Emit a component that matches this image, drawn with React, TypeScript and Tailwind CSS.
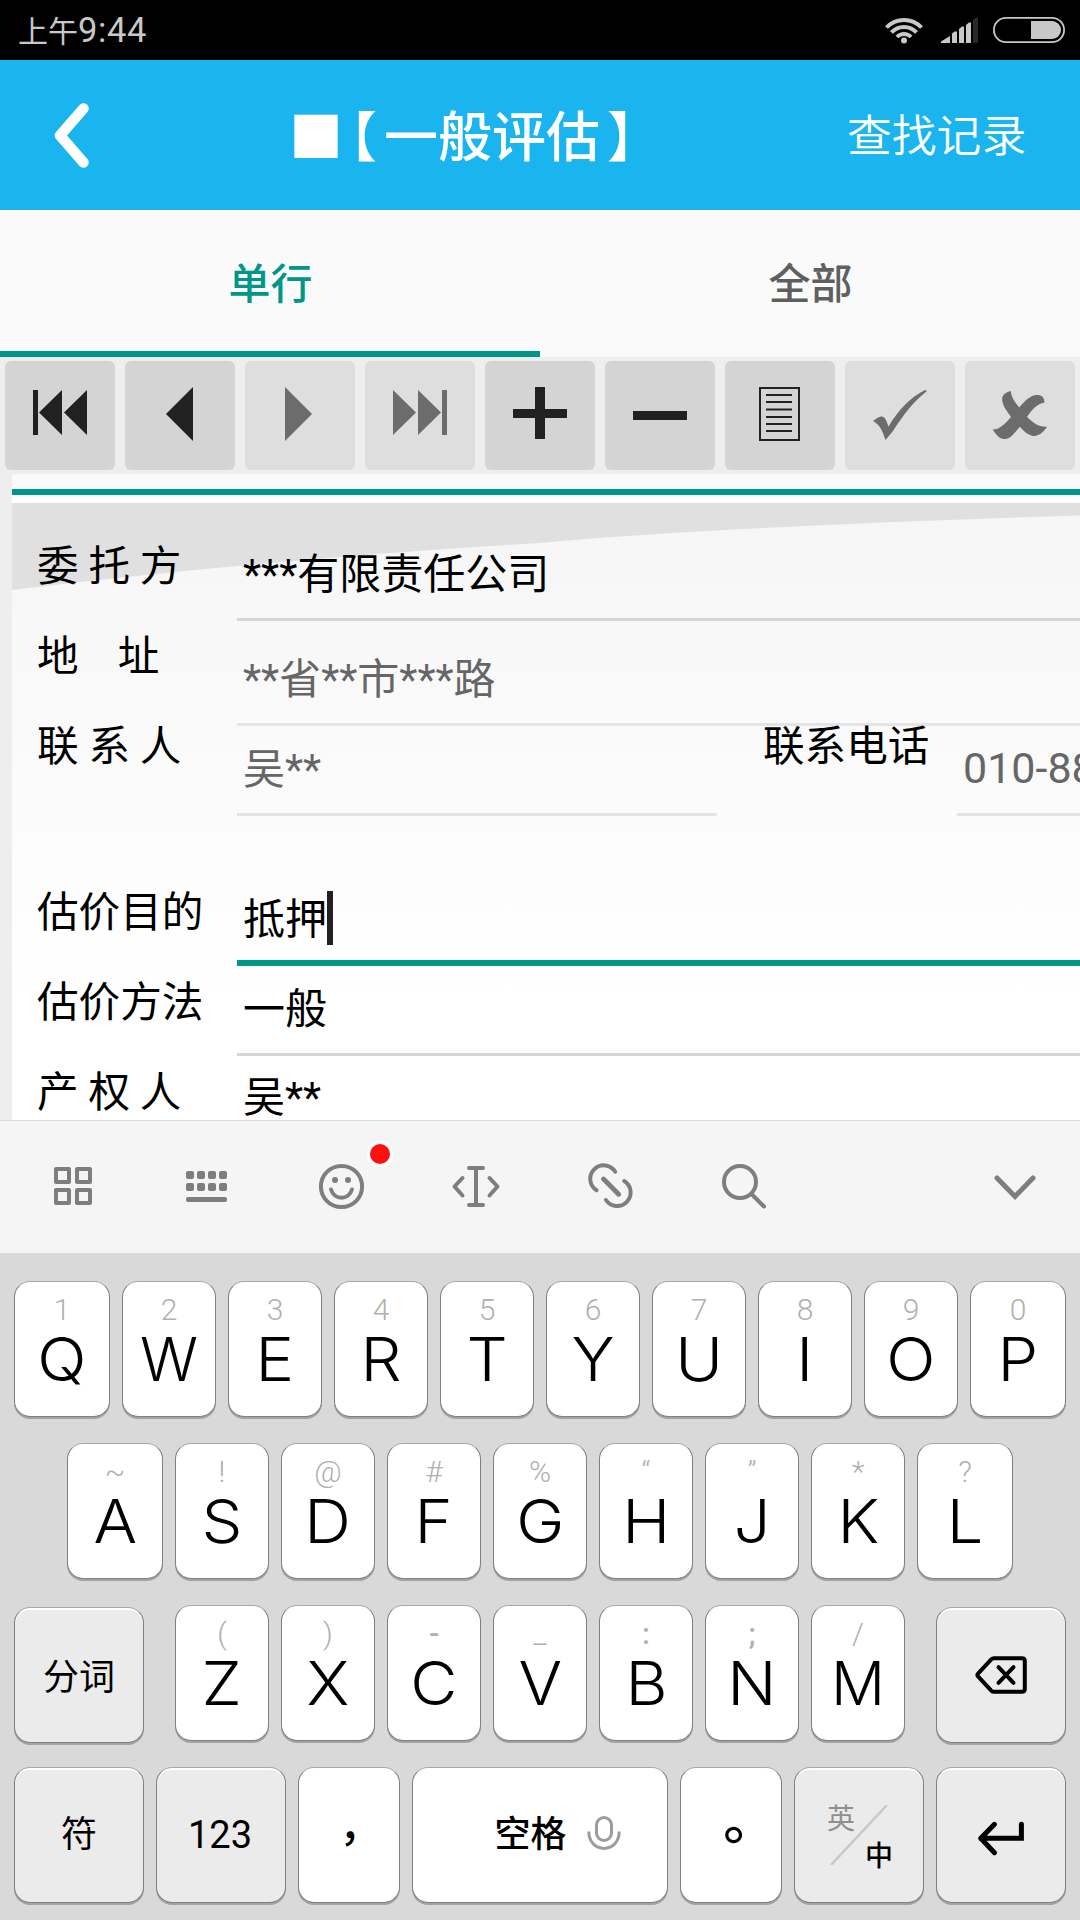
import type { ReactNode } from "react";
import { clsx } from "clsx";

const BackIcon = () => (
  <svg className="h-[70px] w-10" viewBox="0 0 40 70" fill="none">
    <path
      d="M33.500 8.500 10 35.500 33.500 62.500"
      stroke="#fff"
      strokeWidth="10.500"
      strokeLinecap="round"
      strokeLinejoin="round"
    />
  </svg>
);

const StatusBar = () => (
  <div className="flex h-[60px] items-center justify-between bg-black pr-[15px] pl-[18px] text-[#c8c8c8]">
    <div className="flex items-baseline pt-[2px]">
      <span className="text-[30px] leading-[40px]">上午</span>
      <span className="text-[34.5px] leading-[40px] tracking-[0.6px]">9:44</span>
    </div>
    <div className="flex items-center">
      <svg className="h-7 w-[38px]" viewBox="0 0 38 28" fill="none" stroke="#c8c8c8" strokeWidth="4">
        <path d="M1.500 11.500a24 24 0 0 1 35 0" />
        <path d="M6.500 16.500a17 17 0 0 1 25 0" />
        <path d="M12 21a9.500 9.500 0 0 1 14 0" />
        <circle cx="19" cy="24.600" r="3" fill="#c8c8c8" stroke="none" />
      </svg>
      <svg className="ml-[18px] h-[26px] w-[37px]" viewBox="0 0 37 26" fill="#c8c8c8">
        <path d="M0 26v-1.500L9 19v7zM11 26v-9.500l2.500-2h2.500v11.500zM18 26V12l3-2.500h2V26zM25 26V8l3-2.500h2V26z" />
        <path d="M32 26V3l3-2.500h2V26z" fill="#292929" />
      </svg>
      <svg className="ml-[15px] h-[26px] w-[72px]" viewBox="0 0 72 26">
        <rect x="0.9" y="0.9" width="70.200" height="24.200" rx="12.100" fill="none" stroke="#c8c8c8" strokeWidth="1.800" />
        <path d="M38 4h21a9 9 0 0 1 0 18H38z" fill="#c8c8c8" />
      </svg>
    </div>
  </div>
);

const Header = () => (
  <div className="flex h-[150px] items-center bg-[#1ab4ef] text-white">
    <div className="flex w-[289px] pl-[50px]">
      <BackIcon />
    </div>
    <div className="flex w-[558px] pt-[7px] text-[54px] leading-[60px] font-medium">
      <span className="-mr-[20px]">■</span>
      <span className="mr-[7px]">【</span>
      <span className="mr-[7px]">一般评估</span>
      <span>】</span>
    </div>
    <div className="pt-1 text-[44.8px] leading-[60px] font-[350]">查找记录</div>
  </div>
);

const Tabs = () => (
  <div className="flex h-[147px] bg-[#fafafa] text-[42px] leading-[60px] font-medium">
    <div className="flex w-1/2 items-center justify-center border-b-6 border-[#009688] pt-2 pl-px text-[#009688]">
      单行
    </div>
    <div className="flex w-1/2 items-center justify-center pt-[2px] pl-px text-[#5f5f5f]">全部</div>
  </div>
);

const tools: { icon: ReactNode; disabled?: boolean }[] = [
  { icon: <path d="M28 29h5v45h-5zM34 51.500 57 29v45zM59 51.500 82 29v45z" /> },
  { icon: <path d="M41 53 68 26v54z" /> },
  { icon: <path d="M67 53 40 26v54z" />, disabled: true },
  { icon: <path d="M77 29h5v45h-5zM51 51.500 28 29v45zM76 51.500 53 29v45z" />, disabled: true },
  { icon: <path d="M28 48h22V26h10v22h22v9H60v21H50V57H28z" /> },
  { icon: <path d="M28 50h54v9H28z" /> },
  {
    icon: (
      <path
        d="M35 27h39v52H35zM41 34h26M41 41h26M41 48.500h26M41 56h26M41 63h26M41 70h26"
        fill="none"
        stroke="currentColor"
        strokeWidth="2"
      />
    ),
  },
  {
    icon: (
      <path d="M28 60c3-2 5-4 8-4.500 3-.5 5 2 7.500 10.200C53 49 66 36 80 29l2 1C68 41 59 53 48 70l-7.500 9C38 72 36 64 28 60z" />
    ),
    disabled: true,
  },
  {
    icon: (
      <path d="M45.700 30c-5 1.500-8 3.500-8.500 7-.5 7 4 12 8.800 19-5 6-8.500 9-11.300 10.500-2 1.500-4.500 1.500-6.900 2.200C32 75 35 78 40 78c6-.5 9-6 15-12.300C60 72 65 75 70 75c5-1 9-4.500 12-9.300-8 .5-14-3.700-20-10 5-6.700 10-13 17.500-14.200C79 36 77 34 72 34c-6-.2-12 5.500-17.800 12.500C50 41 46.500 37 45.700 30z" />
    ),
    disabled: true,
  },
];

const Toolbar = () => (
  <div className="flex h-[117px] gap-[10px] bg-[#eeeeee] px-[5px] py-1">
    {tools.map((tool, i) => (
      <button
        key={i}
        className={clsx(
          "h-[109px] w-[110px] rounded-md",
          tool.disabled ? "bg-[#dedede] text-[#6c6c6c]" : "bg-[#d4d4d4] text-[#212121]"
        )}
      >
        <svg className="h-[109px] w-[110px]" viewBox="0 0 110 109" fill="currentColor">
          {tool.icon}
        </svg>
      </button>
    ))}
  </div>
);

const Label = ({ children, className }: { children: ReactNode; className?: string }) => (
  <div
    className={clsx(
      "h-9 shrink-0 pt-[3px] text-[41.6px] leading-9 whitespace-pre [word-spacing:-0.5px]",
      className
    )}
  >
    {children}
  </div>
);

const Field = ({ children, className }: { children: ReactNode; className?: string }) => (
  <div className={clsx("flex items-end border-b-3 pl-[6px] leading-[42px]", className)}>
    {children}
  </div>
);

const Form = () => (
  <div className="h-[646px] overflow-hidden bg-[#eeeeee] pl-3">
    <div className="h-[15px] bg-[#fafafa]" />
    <div className="h-[6px] bg-[#009688]" />
    <div className="h-2 bg-white" />
    <div className="relative h-[617px] overflow-hidden text-[42px] text-black">
      <svg className="absolute inset-0 h-[617px] w-[1068px]" viewBox="0 0 1068 617">
        <defs>
          <linearGradient id="paper" x1="0" y1="0" x2="0" y2="1">
            <stop offset="0" stopColor="#f6f6f6" />
            <stop offset="0.2" stopColor="#f8f8f8" />
            <stop offset="0.8" stopColor="#ffffff" />
          </linearGradient>
        </defs>
        <rect width="1068" height="617" fill="url(#paper)" />
        <path d="M0 0H1068V12.500Q700 24 528 40Q260 56 0 87z" fill="#e0e0e0" />
      </svg>
      <div className="relative flex flex-col pl-[25px]">
        <div className="flex h-[118px]">
          <Label className="mt-[43px] w-[200px]">委 托 方</Label>
          <Field className="grow border-[#d6d6d6] pb-[22px]">***有限责任公司</Field>
        </div>
        <div className="flex h-[105px]">
          <Label className="mt-[15px] w-[200px]">地    址</Label>
          <Field className="grow border-[#e4e4e4] pb-[22px] text-[#666]">**省**市***路</Field>
        </div>
        <div className="flex h-[90px]">
          <Label className="w-[200px]">联 系 人</Label>
          <Field className="w-[480px] border-[#e4e4e4] pb-[22px] text-[#666]">吴**</Field>
          <Label className="w-[240px] pl-[46px]">联系电话</Label>
          <Field className="grow border-[#e4e4e4] pb-6 text-[43px] text-[#666]">
            <span className="w-[117px] overflow-hidden whitespace-nowrap">010-88</span>
          </Field>
        </div>
        <div className="flex h-[150px]">
          <Label className="mt-[76px] w-[200px]">估价目的</Label>
          <Field className="grow border-b-6 border-[#009688] pb-[19px]">
            <span>抵押</span>
            <span className="-mb-1 h-[54px] w-[6px] bg-[#212121]" />
          </Field>
        </div>
        <div className="flex h-[90px]">
          <Label className="mt-4 w-[200px]">估价方法</Label>
          <Field className="grow border-[#d6d6d6] pb-[22px]">一般</Field>
        </div>
        <div className="flex h-[90px]">
          <Label className="mt-4 w-[200px]">产 权 人</Label>
          <Field className="grow border-[#d6d6d6] pb-[24px]">吴**</Field>
        </div>
      </div>
    </div>
  </div>
);

const imeTools: ReactNode[] = [
  <path d="M7 6h13v13H7zM28 6h13v13H28zM7 27h13v13H7zM28 27h13v13H28z" strokeLinejoin="round" />,
  <g fill="#7e7e7e" stroke="none">
    {[3, 14, 25, 36].map((x) => (
      <g key={x}>
        <rect x={x} y="8" width="8" height="8" rx="2" />
        <rect x={x} y="20" width="8" height="8" rx="2" />
      </g>
    ))}
    <rect x="3" y="34" width="41" height="5" rx="2" />
  </g>,
  <>
    <circle cx="23.500" cy="23.500" r="20.600" />
    <circle cx="17" cy="17" r="3" fill="#7e7e7e" stroke="none" />
    <circle cx="30" cy="17" r="3" fill="#7e7e7e" stroke="none" />
    <path d="M13 26.500c3.500 11 17.500 11 21 0" />
  </>,
  <path d="M10.500 15 2.500 23.500l8 9M37.500 15l8 8.500-8 9M17 5h14M17 42h14M24 5v37" strokeLinejoin="round" />,
  <g transform="translate(1 0)">
    <path d="M9.600 27.300A13.500 13.500 0 1 1 28.200 8.700M37.200 18A13.500 13.500 0 1 1 18.900 37" />
    <path d="M16.500 16 31.700 31.300" strokeWidth="4.800" />
  </g>,
  <path d="M19 3a16 16 0 1 1 0 32 16 16 0 0 1 0-32M31 31.500 43 43.500" />,
];

const ImeToolbar = () => (
  <div className="flex h-[133px] items-center border-t border-[#dcdcdc] bg-[#f5f5f5] pl-[6px]">
    {imeTools.map((icon, i) => (
      <div key={i} className="relative flex w-[134.3px] justify-center">
        <svg
          className="size-12 overflow-visible"
          viewBox="0 0 48 48"
          fill="none"
          stroke="#7e7e7e"
          strokeWidth="4"
          strokeLinecap="round"
        >
          {icon}
        </svg>
        {i === 2 && (
          <span className="absolute -top-[22px] left-[92px] size-[26px] rounded-full border-3 border-white bg-[#ff1010]" />
        )}
      </div>
    ))}
    <svg className="mr-[41px] ml-auto size-12" viewBox="0 0 48 48" fill="none" stroke="#7e7e7e" strokeWidth="5" strokeLinecap="round">
      <path d="M6 15 24 33.500 42 15" />
    </svg>
  </div>
);

const keyBase =
  "flex h-[136px] shrink-0 rounded-[16px] border border-[#808080] border-t-[#a8a8a8] text-black";

const LetterKey = ({ letter, hint, wide }: { letter: string; hint: string; wide?: boolean }) => (
  <div
    className={clsx(
      keyBase,
      "flex-col items-center bg-white pt-[13px] shadow-[0_2px_0_#a3a3a3]",
      wide ? "w-24" : "w-[94px]"
    )}
  >
    <span
      className={clsx(
        "text-[30px] leading-[30px] text-[#b0b0b0]",
        ":;-".includes(hint) ? "font-medium" : "font-light"
      )}
    >
      {hint}
    </span>
    <span
      className={clsx(
        "mt-1 font-[Inter] text-[60px] leading-[60px] font-light",
        !"WM".includes(letter) && "scale-x-108"
      )}
    >
      {letter}
    </span>
  </div>
);

const FnKey = ({ children, className }: { children: ReactNode; className?: string }) => (
  <div
    className={clsx(
      keyBase,
      "w-[130px] items-center justify-center bg-[#ebebeb] text-[36px] shadow-[0_2px_0_#a3a3a3,inset_0_2px_0_#fff]",
      className
    )}
  >
    {children}
  </div>
);

const WhiteKey = ({ children, className }: { children: ReactNode; className?: string }) => (
  <div
    className={clsx(
      keyBase,
      "items-center justify-center bg-white font-medium shadow-[0_2px_0_#a3a3a3]",
      className
    )}
  >
    {children}
  </div>
);

const row1 = ["Q1", "W2", "E3", "R4", "T5", "Y6", "U7", "I8", "O9", "P0"];
const row2 = ["A~", "S!", "D@", "F#", "G%", "H“", "J”", "K*", "L?"];
const row3 = ["Z(", "X)", "C-", "V_", "B:", "N;", "M/"];

const Keyboard = () => (
  <div className="flex h-[667px] flex-col gap-[26px] bg-[#d9d9d9] px-[14px] pt-7">
    <div className="flex gap-3">
      {row1.map((k, i) => (
        <LetterKey key={k} letter={k[0]} hint={k[1]} wide={i === 0 || i === 9} />
      ))}
    </div>
    <div className="flex justify-center gap-3">
      {row2.map((k, i) => (
        <LetterKey key={k} letter={k[0]} hint={k[1]} wide={i === 0 || i === 8} />
      ))}
    </div>
    <div className="flex h-[136px] justify-between">
      <FnKey className="mt-[2px] pt-[6px]">分词</FnKey>
      <div className="flex gap-3">
        {row3.map((k) => (
          <LetterKey key={k} letter={k[0]} hint={k[1]} />
        ))}
      </div>
      <FnKey className="mt-[2px]">
        <svg className="h-10 w-[52px]" viewBox="0 0 52 40" fill="none" stroke="#000" strokeWidth="4" strokeLinecap="round" strokeLinejoin="round">
          <path d="M19 3.200h28q2.800 0 2.800 2.800v28q0 2.800-2.800 2.800H19q-1.500 0-2.500-1L2.800 21.200q-.8-1.200 0-2.400L16.500 4.200q1-1 2.500-1z" />
          <path d="M23.500 12.200 38.500 27.800M38.500 12.200 23.500 27.800" />
        </svg>
      </FnKey>
    </div>
    <div className="flex gap-3">
      <FnKey className="pb-px">符</FnKey>
      <FnKey className="pr-[2px] pb-px">
        <span className="text-[38px] leading-none">123</span>
      </FnKey>
      <WhiteKey className="w-[102px] pl-[2px] font-['Noto_Sans_CJK_TC',sans-serif] text-[42px]">，</WhiteKey>
      <WhiteKey className="w-64 gap-[20px] pb-[5px] pl-[35px] text-[36px]">
        <span className="mt-1">空格</span>
        <svg className="h-[34px] w-[34px]" viewBox="0 0 34 34" fill="none" stroke="#9c9c9c" strokeWidth="3">
          <rect x="9.500" y="1.500" width="15" height="23" rx="7.500" />
          <path d="M1.800 15.500c0 22.500 30.400 22.500 30.400 0" />
        </svg>
      </WhiteKey>
      <WhiteKey className="w-[102px] pl-[5px] font-['Noto_Sans_CJK_TC',sans-serif] text-[54px] leading-[60px]">
        <span className="-mt-[5px]">。</span>
      </WhiteKey>
      <FnKey className="relative">
        <svg className="h-[60px] w-[58px]" viewBox="0 0 58 60">
          <path d="M1 60 57 0" stroke="#c8c8c8" strokeWidth="2.500" />
        </svg>
        <span className="absolute top-[37px] left-[32px] text-[28px] leading-[30px] text-[#8f8f8f]">英</span>
        <span className="absolute top-[74px] left-[70px] text-[28px] leading-[30px] font-medium">中</span>
      </FnKey>
      <FnKey>
        <svg className="mt-[6px] h-10 w-[52px]" viewBox="0 0 52 40" fill="none" stroke="#000" strokeWidth="5" strokeLinecap="round">
          <path d="M19.500 6.300 5.800 20.300l13.700 14.400" strokeLinejoin="round" />
          <path d="M6 20.300h40.400v-14" />
        </svg>
      </FnKey>
    </div>
  </div>
);

export default function App() {
  return (
    <div className="h-[1920px] w-[1080px] overflow-hidden font-[Roboto,'Noto_Sans_CJK_SC',sans-serif]">
      <StatusBar />
      <Header />
      <Tabs />
      <Toolbar />
      <Form />
      <ImeToolbar />
      <Keyboard />
    </div>
  );
}
